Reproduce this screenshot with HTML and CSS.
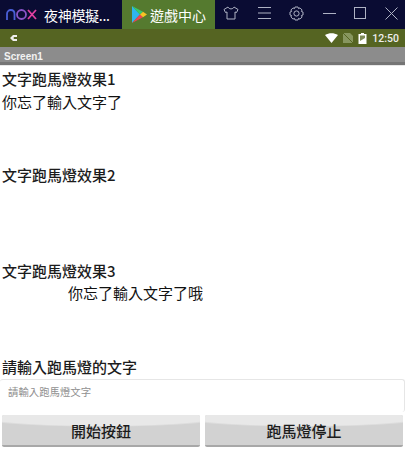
FILE: index.html
```html
<!DOCTYPE html>
<html lang="zh-Hant">

<head>
    <meta charset="UTF-8">
    <meta name="viewport" content="width=device-width, initial-scale=1.0">
    <title>Screen1</title>
    <link rel="stylesheet" href="styles.css">
</head>

<body>
    <div class="phone">
        <!-- Emulator title bar -->
        <div class="nox-bar">
            <div class="nox-brand">
                <svg class="nox-logo" width="31" height="11" viewBox="0 0 31 11" fill="none" stroke-width="1.8">
                    <path d="M1 11V5C1 2.500 2.800 1 4.800 1S8.500 2.500 8.500 5V11" stroke="#4a5fd8" />
                    <circle cx="15.500" cy="5.500" r="4.500" stroke="#8a55c8" />
                    <path d="M22 1L30 10M30 1L22 10" stroke="#e040a0" />
                </svg>
                <span class="nox-title">夜神模擬...</span>
            </div>
            <div class="nox-tab">
                <svg width="15" height="17" viewBox="0 0 15 18" preserveAspectRatio="none">
                    <path d="M0 0L8 9L0 18Z" fill="#2fb5ee" />
                    <path d="M0 0L11 6L8 9Z" fill="#35c96f" />
                    <path d="M0 18L11 12L8 9Z" fill="#ee4455" />
                    <path d="M11 6L15 9L11 12L8 9Z" fill="#f7c325" />
                </svg>
                <span>遊戲中心</span>
            </div>
            <div class="nox-tools">
                <svg width="16" height="14" viewBox="0 0 16 14" fill="none" stroke="#aeb2c4">
                    <path d="M5 1L1 3.500L2.500 6.500L4 6V13H12V6L13.500 6.500L15 3.500L11 1C10 3.500 6 3.500 5 1Z" />
                </svg>
                <svg width="13" height="12" viewBox="0 0 13 12" fill="none" stroke="#aeb2c4">
                    <path d="M0 .5H13M0 6H13M0 11.500H13" />
                </svg>
                <svg width="15" height="15" viewBox="0 0 15 15" fill="none" stroke="#aeb2c4">
                    <circle cx="7.500" cy="7.500" r="2.600" />
                    <path d="M6 1H9L9.500 2.600L11 1.900L13.100 4L12.400 5.500L14 6V9L12.400 9.500L13.100 11L11 13.100L9.500 12.400L9 14H6L5.500 12.400L4 13.100L1.900 11L2.600 9.500L1 9V6L2.600 5.500L1.900 4L4 1.900L5.500 2.600Z" />
                </svg>
                <svg width="13" height="3" viewBox="0 0 13 3" stroke="#aeb2c4">
                    <path d="M0 1.500H13" />
                </svg>
                <svg width="12" height="12" viewBox="0 0 12 12" fill="none" stroke="#aeb2c4">
                    <rect x=".5" y=".5" width="11" height="11" />
                </svg>
                <svg width="13" height="13" viewBox="0 0 13 13" stroke="#aeb2c4">
                    <path d="M.5 .5L12.500 12.500M12.500 .5L.5 12.500" />
                </svg>
            </div>
        </div>

        <!-- Android status bar -->
        <div class="status-bar">
            <svg class="usb" width="7" height="6" viewBox="0 0 7 6">
                <path d="M0 3L3 0H7V2H4L3.500 3L4 4H7V6H3Z" fill="#eee" />
            </svg>
            <div class="status-right">
                <svg class="wifi" width="13" height="10" viewBox="0 0 13 10">
                    <path d="M0 2C4 -.5 9 -.5 13 2L6.500 10Z" fill="#fff" />
                </svg>
                <svg class="sim" width="10" height="10" viewBox="0 0 10 10">
                    <path d="M0 0H7L10 3V10H0Z" fill="#87965f" />
                    <path d="M0 0L10 10" stroke="#556422" />
                </svg>
                <svg class="battery" width="9" height="11" viewBox="0 0 8 11">
                    <path d="M2.500 0H5.500V1H8V11H0V1H2.500Z" fill="#fff" />
                    <path d="M1.500 2.500H6.500V5L1.500 8Z" fill="#7d8a56" />
                </svg>
                <span class="clock">12:50</span>
            </div>
        </div>

        <div class="title-bar">Screen1</div>

        <div class="content">
            <div class="label">文字跑馬燈效果1</div>
            <div class="marquee first">你忘了輸入文字了</div>
            <div class="label">文字跑馬燈效果2</div>
            <div class="marquee second"></div>
            <div class="label">文字跑馬燈效果3</div>
            <div class="marquee third">你忘了輸入文字了哦</div>
            <div class="label">請輸入跑馬燈的文字</div>
            <input class="text-input" type="text" placeholder="請輸入跑馬燈文字">
            <div class="buttons">
                <button>開始按鈕</button>
                <button>跑馬燈停止</button>
            </div>
        </div>
    </div>
</body>

</html>
```

FILE: styles.css
```css
html,
body {
    margin: 0;
    height: 100%;
    overflow: hidden;
    background-color: white;
}

.phone {
    width: 405px;
    height: 449px;
    display: flex;
    flex-direction: column;
    font-family: "Noto Sans CJK TC", "Liberation Sans", sans-serif;
}

.nox-bar {
    height: 29px;
    display: flex;
    background-color: #0a0c33;
    color: white;
}

.nox-brand {
    width: 122px;
    display: flex;
    align-items: center;
    padding-left: 6px;
    gap: 7px;
    box-sizing: border-box;
}

.nox-title {
    font-size: 14px;
    white-space: nowrap;
    letter-spacing: -0.3px;
}

.nox-tab {
    width: 93px;
    display: flex;
    align-items: center;
    padding-left: 10px;
    gap: 3px;
    box-sizing: border-box;
    background-color: #557a2f;
    font-size: 14px;
}

.nox-tools {
    flex: 1;
    display: flex;
    align-items: center;
    justify-content: space-between;
    padding: 0 7px 3px 8px;
}

.status-bar {
    height: 18px;
    display: flex;
    align-items: center;
    justify-content: space-between;
    padding: 0 6px 0 10px;
    background-color: #556422;
}

.status-right {
    display: flex;
    align-items: center;
    gap: 5px;
}

.clock {
    color: #eee;
    font-family: "Roboto", sans-serif;
    font-size: 10.5px;
    font-weight: 500;
}

.title-bar {
    height: 18px;
    padding: 4px 0 0 4px;
    box-sizing: border-box;
    background-color: #8c8c8c;
    border-bottom: 3px solid #757575;
    color: #f2f2f2;
    font-family: "Liberation Sans", sans-serif;
    font-size: 10px;
    font-weight: bold;
    line-height: 12px;
}

.content {
    flex: 1;
    display: flex;
    flex-direction: column;
    color: #1c1c1c;
    font-size: 15px;
    border-top: 1px solid #e8e8e8;
}

.label {
    height: 21px;
    padding-left: 2px;
    line-height: 21px;
    white-space: nowrap;
    margin-top: 2px;
    font-weight: 500;
}

.marquee {
    padding-left: 2px;
    line-height: 21px;
    color: #111;
}

.marquee.first {
    margin-top: 2px;
    height: 71px;
}

.marquee.second {
    height: 73px;
}

.marquee.third {
    margin-top: 1px;
    height: 72px;
    padding-left: 68px;
}

.text-input {
    height: 33px;
    margin: 2px 0 3px;
    padding: 0 8px 9px;
    box-sizing: border-box;
    border: 1px solid #e6e6e6;
    border-bottom: none;
    border-left: none;
    border-radius: 3px;
    outline: none;
    font-family: inherit;
    font-size: 10.4px;
}

.text-input::placeholder {
    color: #909090;
}

.buttons {
    display: flex;
    gap: 5px;
    padding: 0 2px;
}

button {
    flex: 1;
    height: 32px;
    padding: 0;
    border: none;
    border-bottom: 2px solid #a8a8a8;
    border-radius: 2px;
    background: radial-gradient(ellipse 70% 12px at 50% 0, #e8e8e8 88%, #d2d2d2 100%) #d2d2d2;
    color: #1c1c1c;
    font-family: inherit;
    font-size: 15px;
    font-weight: 500;
}
```
